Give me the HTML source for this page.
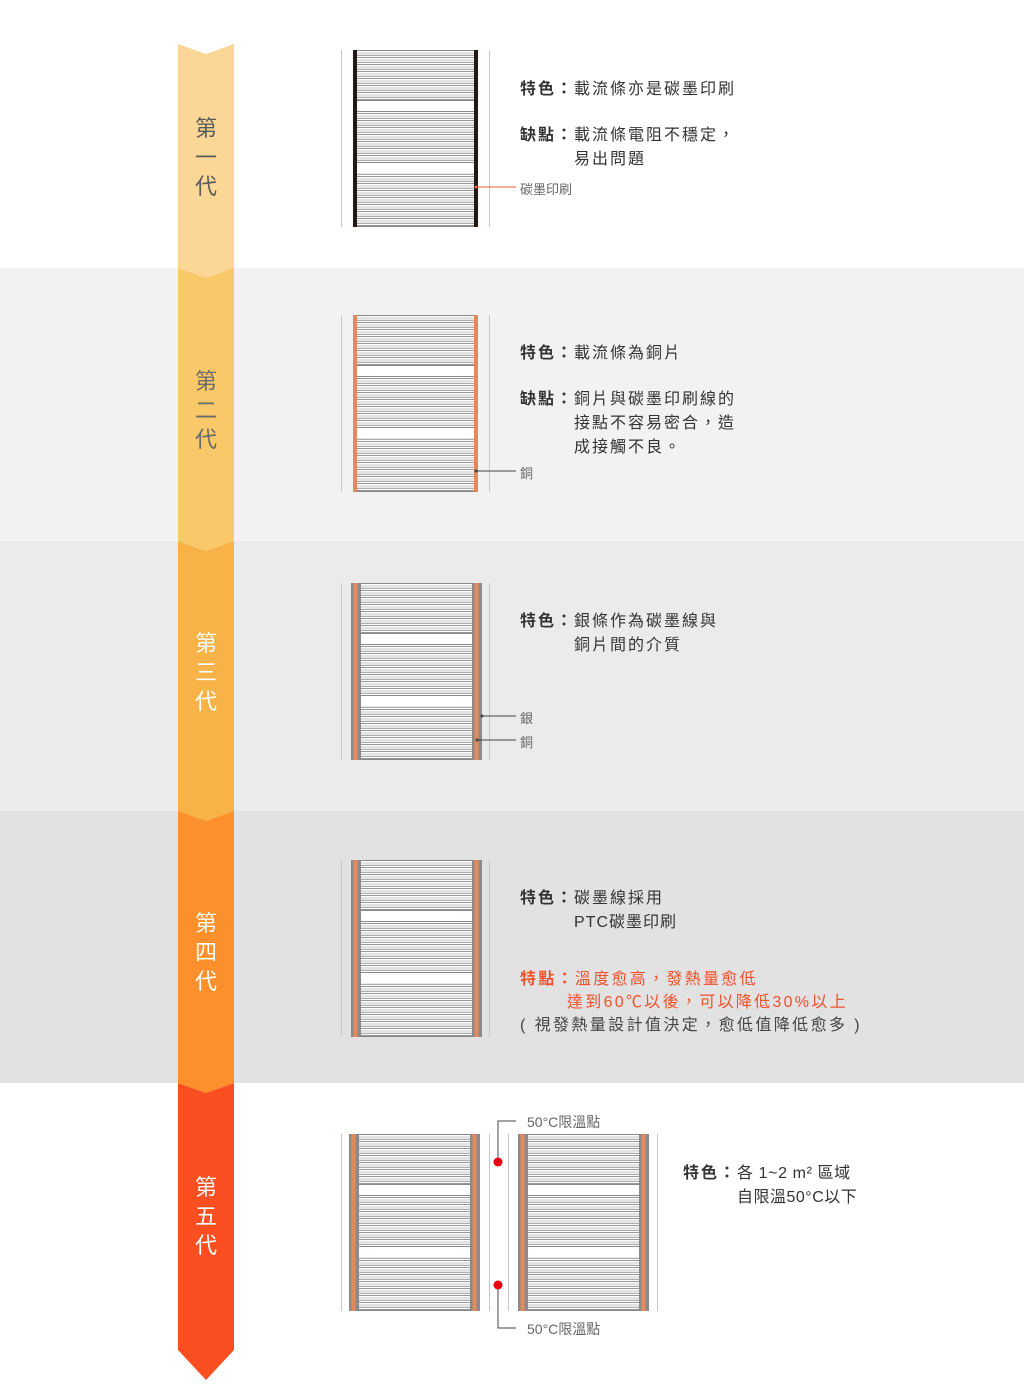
<!DOCTYPE html>
<html><head><meta charset="utf-8"><style>
body{margin:0;width:1024px;height:1386px;position:relative;background:#fff;font-family:"Liberation Sans","Noto Sans CJK TC",sans-serif;overflow:hidden}
.bg{position:absolute;left:0;width:1024px}
.a{position:absolute}
.t{position:absolute;font-size:16px;color:#333;line-height:24px;white-space:nowrap;letter-spacing:2px}
.t b{font-weight:bold}
.s{position:absolute;font-size:13px;color:#666;white-space:nowrap}
.rib{position:absolute;left:178px;width:56px;text-align:center;font-size:22px;line-height:29px}
</style></head><body>
<div class="bg" style="top:0;height:268px;background:#fff"></div>
<div class="bg" style="top:268px;height:273px;background:#f2f2f2"></div>
<div class="bg" style="top:541px;height:270px;background:#ebebeb"></div>
<div class="bg" style="top:811px;height:272px;background:#e3e2e3"></div>
<div class="bg" style="top:1083px;height:303px;background:#fff"></div>

<svg class="a" style="left:0;top:0" width="1024" height="1386">
<defs>
<pattern id="st" width="10" height="7" patternUnits="userSpaceOnUse">
<rect width="10" height="7" fill="#fff"/>
<rect y="0" width="10" height="0.9" fill="#8a8a8a"/>
<rect y="2.4" width="10" height="1.2" fill="#cfcfcf"/>
<rect y="4.8" width="10" height="0.9" fill="#8a8a8a"/>
</pattern>
<g id="gap">
<rect y="50" width="131" height="11" fill="#fff"/><rect y="50" width="131" height="1" fill="#8a8a8a"/><rect y="61" width="131" height="1" fill="#8a8a8a"/>
<rect y="112" width="131" height="11" fill="#fff"/><rect y="112" width="131" height="1" fill="#8a8a8a"/>
</g>
</defs>
<polygon points="178,44 206,54 234,44 234,268 206,278 178,268" fill="#fad797"/>
<polygon points="178,268 206,278 234,268 234,541 206,551 178,541" fill="#f9c868"/>
<polygon points="178,541 206,551 234,541 234,811 206,821 178,811" fill="#f7b347"/>
<polygon points="178,811 206,821 234,811 234,1083 206,1093 178,1083" fill="#fb902c"/>
<polygon points="178,1083 206,1093 234,1083 234,1350 206,1380 178,1350" fill="#fb4f22"/>

<g transform="translate(353,50)">
<rect width="125" height="177" fill="url(#st)"/>
<svg width="125" height="177"><use href="#gap"/></svg>
<rect width="125" height="1" fill="#888"/><rect y="176" width="125" height="1" fill="#888"/>
<rect width="4" height="177" fill="#231815"/><rect x="121" width="4" height="177" fill="#231815"/>
</g>
<g transform="translate(353,315)">
<rect width="125" height="177" fill="url(#st)"/>
<svg width="125" height="177"><use href="#gap"/></svg>
<rect width="125" height="1" fill="#888"/><rect y="176" width="125" height="1" fill="#888"/>
<rect width="4" height="177" fill="#e5895a"/><rect x="121" width="4" height="177" fill="#e5895a"/>
</g>
<g transform="translate(351,583)">
<rect width="131" height="177" fill="url(#st)"/>
<use href="#gap"/>
<rect width="131" height="1" fill="#888"/><rect y="176" width="131" height="1" fill="#888"/>
<rect width="10" height="177" fill="#8a8a8a"/><rect x="2.5" width="4" height="177" fill="#e5895a"/>
<rect x="121" width="10" height="177" fill="#8a8a8a"/><rect x="123.5" width="4" height="177" fill="#e5895a"/>
</g>
<g transform="translate(351,860)">
<rect width="131" height="177" fill="url(#st)"/>
<use href="#gap"/>
<rect width="131" height="1" fill="#888"/><rect y="176" width="131" height="1" fill="#888"/>
<rect width="10" height="177" fill="#8a8a8a"/><rect x="2.5" width="4" height="177" fill="#e5895a"/>
<rect x="121" width="10" height="177" fill="#8a8a8a"/><rect x="123.5" width="4" height="177" fill="#e5895a"/>
</g>
<g transform="translate(349,1134)">
<rect width="131" height="177" fill="url(#st)"/>
<use href="#gap"/>
<rect width="131" height="1" fill="#888"/><rect y="176" width="131" height="1" fill="#888"/>
<rect width="10" height="177" fill="#8a8a8a"/><rect x="2.5" width="4" height="177" fill="#e5895a"/>
<rect x="121" width="10" height="177" fill="#8a8a8a"/><rect x="123.5" width="4" height="177" fill="#e5895a"/>
</g>
<g transform="translate(518,1134)">
<rect width="131" height="177" fill="url(#st)"/>
<use href="#gap"/>
<rect width="131" height="1" fill="#888"/><rect y="176" width="131" height="1" fill="#888"/>
<rect width="10" height="177" fill="#8a8a8a"/><rect x="2.5" width="4" height="177" fill="#e5895a"/>
<rect x="121" width="10" height="177" fill="#8a8a8a"/><rect x="123.5" width="4" height="177" fill="#e5895a"/>
</g>

<g fill="#c8c8c8">
<rect x="341" y="50" width="1" height="177"/><rect x="489" y="50" width="1" height="177"/>
<rect x="341" y="315" width="1" height="177"/><rect x="489" y="315" width="1" height="177"/>
<rect x="341" y="583" width="1" height="177"/><rect x="489" y="583" width="1" height="177"/>
<rect x="341" y="860" width="1" height="177"/><rect x="489" y="860" width="1" height="177"/>
<rect x="341" y="1134" width="1" height="177"/><rect x="489" y="1134" width="1" height="177"/>
<rect x="508" y="1134" width="1" height="177"/><rect x="657" y="1134" width="1" height="177"/>
</g>
<line x1="476" y1="187" x2="516" y2="187" stroke="#e5603a" stroke-width="1"/><circle cx="476" cy="187" r="1.5" fill="#e5603a"/>
<line x1="476" y1="471" x2="516" y2="471" stroke="#444"/><circle cx="476" cy="471" r="1.5" fill="#444"/>
<line x1="482" y1="716" x2="516" y2="716" stroke="#444"/><circle cx="482" cy="716" r="1.5" fill="#444"/>
<line x1="477" y1="740" x2="516" y2="740" stroke="#444"/><circle cx="477" cy="740" r="1.5" fill="#444"/>
<polyline points="516,1121 498,1121 498,1162" fill="none" stroke="#444"/>
<polyline points="516,1328 498,1328 498,1285" fill="none" stroke="#444"/>
<circle cx="498" cy="1162" r="4.5" fill="#e60012"/>
<circle cx="498" cy="1285" r="4.5" fill="#e60012"/>
</svg>

<div class="rib" style="top:114px;color:#5a5a5a">第<br>一<br>代</div>
<div class="rib" style="top:367px;color:#6a6a6a">第<br>二<br>代</div>
<div class="rib" style="top:629px;color:#fff">第<br>三<br>代</div>
<div class="rib" style="top:909px;color:#fff">第<br>四<br>代</div>
<div class="rib" style="top:1173px;color:#fff">第<br>五<br>代</div>

<div class="t" style="left:520px;top:78px"><b>特色：</b>載流條亦是碳墨印刷</div>
<div class="t" style="left:520px;top:124px"><b>缺點：</b>載流條電阻不穩定，<br><span style="padding-left:54px">易出問題</span></div>
<div class="s" style="left:520px;top:179px">碳墨印刷</div>

<div class="t" style="left:520px;top:342px"><b>特色：</b>載流條為銅片</div>
<div class="t" style="left:520px;top:388px"><b>缺點：</b>銅片與碳墨印刷線的<br><span style="padding-left:54px">接點不容易密合，造</span><br><span style="padding-left:54px">成接觸不良。</span></div>
<div class="s" style="left:520px;top:463px">銅</div>

<div class="t" style="left:520px;top:610px"><b>特色：</b>銀條作為碳墨線與<br><span style="padding-left:54px">銅片間的介質</span></div>
<div class="s" style="left:520px;top:708px">銀</div>
<div class="s" style="left:520px;top:732px">銅</div>

<div class="t" style="left:520px;top:887px"><b>特色：</b>碳墨線採用<br><span style="padding-left:54px;letter-spacing:1px">PTC碳墨印刷</span></div>
<div class="t" style="left:520px;top:968px;color:#f0502a;letter-spacing:2.3px;line-height:23px"><b>特點：</b>溫度愈高，發熱量愈低<br><span style="padding-left:47px">達到60℃以後，可以降低30%以上</span><br><span style="color:#444;letter-spacing:2.4px">( 視發熱量設計值決定，愈低值降低愈多 )</span></div>

<div class="s" style="left:527px;top:1112px;font-size:14px">50°C限溫點</div>
<div class="s" style="left:527px;top:1319px;font-size:14px">50°C限溫點</div>
<div class="t" style="left:683px;top:1162px"><b>特色：</b><span style="letter-spacing:0.6px">各 1~2 m² 區域</span><br><span style="padding-left:54px;letter-spacing:0.5px">自限溫50°C以下</span></div>
</body></html>
